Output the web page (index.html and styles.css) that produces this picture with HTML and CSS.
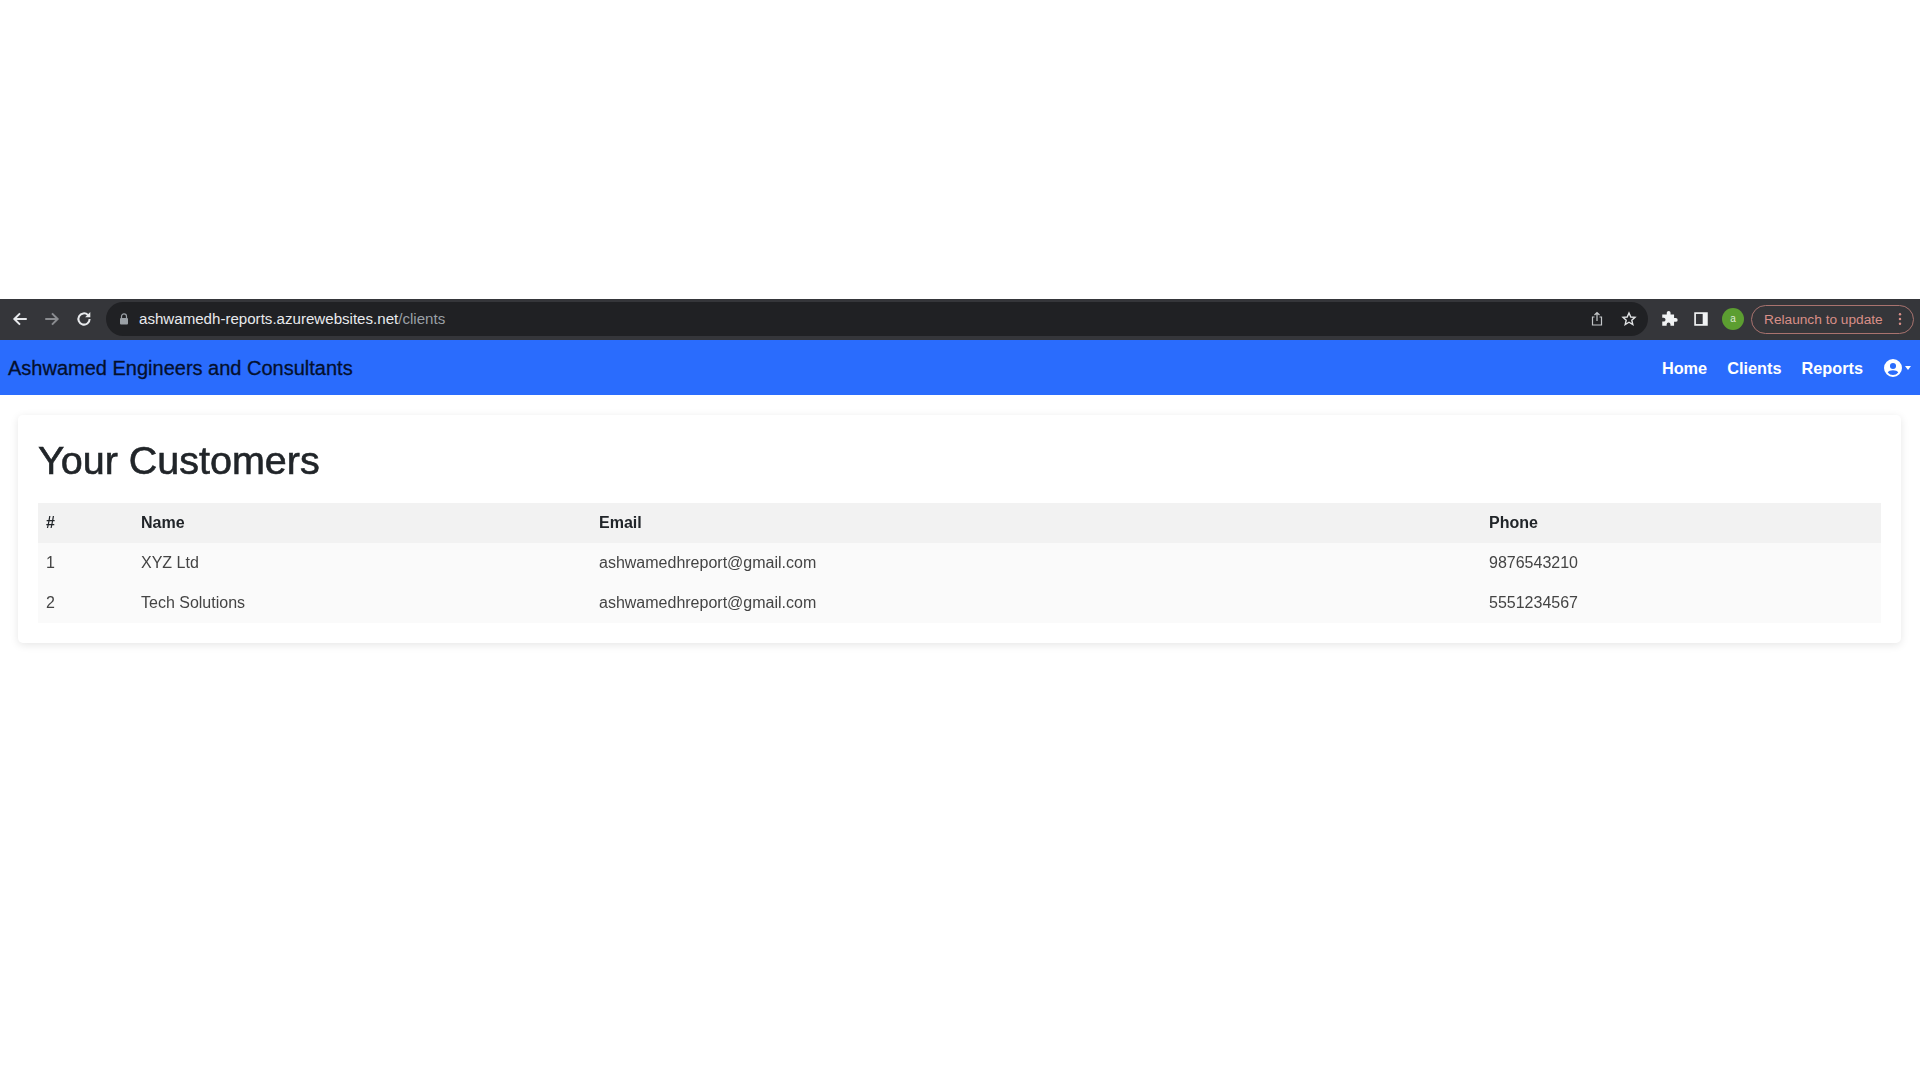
FILE: index.html
```html
<!DOCTYPE html>
<html lang="en">
<head>
    <meta charset="UTF-8">
    <title>Your Customers</title>
    <link rel="stylesheet" href="styles.css">
</head>
<body>
    <div class="shot">
        <div class="toolbar">
            <div class="nav-icons">
                <svg class="tool-icon" viewBox="0 0 16 16"><path d="M14 8H3M8 3 3 8l5 5" fill="none" stroke="#e8eaed" stroke-width="1.8"/></svg>
                <svg class="tool-icon" viewBox="0 0 16 16"><path d="M2 8h11M8 3l5 5-5 5" fill="none" stroke="#8a8c90" stroke-width="1.8"/></svg>
                <svg class="tool-icon" viewBox="0 0 16 16"><path d="M13 8a5 5 0 1 1-1.5-3.6" fill="none" stroke="#e8eaed" stroke-width="1.8"/><path d="M13.6 1.8v4.6H9z" fill="#e8eaed"/></svg>
            </div>
            <div class="omnibox">
                <svg class="lock" viewBox="0 0 10 12"><path d="M2.5 5V3.4a2.5 2.5 0 0 1 5 0V5" fill="none" stroke="#9aa0a6" stroke-width="1.2"/><rect x="1" y="5" width="8" height="6.5" rx="1" fill="#9aa0a6"/></svg>
                <div class="url">ashwamedh-reports.azurewebsites.net<span class="url-path">/clients</span></div>
                <svg class="omni-icon" viewBox="0 0 16 16"><path d="M5.5 6H3.5v8h9V6h-2M8 10V2M5.5 4 8 1.5 10.5 4" fill="none" stroke="#c4c7c9" stroke-width="1.2"/></svg>
                <svg class="omni-icon" viewBox="0 0 16 16"><path d="m8 2 1.8 4 4.2.4-3.2 2.8 1 4.300L8 11.200 4.200 13.500l1-4.300L2 6.400 6.200 6z" fill="none" stroke="#e0e2e4" stroke-width="1.400"/></svg>
            </div>
            <div class="ext-icons">
                <svg class="ext-icon" viewBox="0 0 16 16"><path d="M6 2.500a1.700 1.700 0 0 1 3.400 0V4h3.100v3.100H14a1.700 1.700 0 0 1 0 3.400h-1.500V14H9.300v-1.200a1.700 1.700 0 0 0-3.400 0V14H2v-3.700h1.200a1.700 1.700 0 0 0 0-3.400H2V4h4z" fill="#f1f3f4"/></svg>
                <svg class="ext-icon" viewBox="0 0 16 16"><rect x="2" y="2" width="12" height="12" fill="#f1f3f4"/><rect x="3.500" y="3.500" width="6" height="9" fill="#35363a"/></svg>
                <div class="avatar">a</div>
            </div>
            <div class="relaunch">
                <span class="relaunch-text">Relaunch to update</span>
                <svg class="dots" viewBox="0 0 4 16"><circle cx="2" cy="2.500" r="1.400"/><circle cx="2" cy="8" r="1.400"/><circle cx="2" cy="13.500" r="1.400"/></svg>
            </div>
        </div>

        <nav class="navbar">
            <a class="brand">Ashwamed Engineers and Consultants</a>
            <div class="nav-links">
                <a class="nav-link">Home</a>
                <a class="nav-link">Clients</a>
                <a class="nav-link">Reports</a>
                <div class="user-menu">
                    <svg class="user-icon" viewBox="0 0 16 16"><path fill="#fff" fill-rule="evenodd" d="M8 0a8 8 0 1 0 0 16A8 8 0 0 0 8 0zm0 3.500a2.700 2.700 0 1 1 0 5.400 2.700 2.700 0 0 1 0-5.400zM3.300 12c.7-1.300 2.500-2 4.700-2s4 .7 4.700 2A6.300 6.300 0 0 1 8 14.300 6.300 6.300 0 0 1 3.300 12z"/></svg>
                    <span class="caret"></span>
                </div>
            </div>
        </nav>

        <div class="card">
            <h1>Your Customers</h1>
            <table class="customers">
                <thead>
                    <tr>
                        <th class="col-id">#</th>
                        <th class="col-name">Name</th>
                        <th class="col-email">Email</th>
                        <th>Phone</th>
                    </tr>
                </thead>
                <tbody>
                    <tr>
                        <td>1</td>
                        <td>XYZ Ltd</td>
                        <td>ashwamedhreport@gmail.com</td>
                        <td>9876543210</td>
                    </tr>
                    <tr>
                        <td>2</td>
                        <td>Tech Solutions</td>
                        <td>ashwamedhreport@gmail.com</td>
                        <td>5551234567</td>
                    </tr>
                </tbody>
            </table>
        </div>
    </div>
</body>
</html>
```

FILE: styles.css
```css
body {
    margin: 0;
    background-color: #fff;
    font-family: "Liberation Sans", Arial, sans-serif;
    color: #212529;
}
.shot {
    padding: 299px 0 60px;
    filter: blur(0.6px);
}
.toolbar {
    display: flex;
    align-items: center;
    height: 41px;
    box-sizing: border-box;
    padding-bottom: 1px;
    background-color: #35363a;
}
.nav-icons {
    display: flex;
    gap: 14px;
    padding-left: 11px;
    width: 106px;
    box-sizing: border-box;
}
.tool-icon {
    width: 18px;
    height: 18px;
}
.omnibox {
    display: flex;
    align-items: center;
    width: 1542px;
    height: 34px;
    box-sizing: border-box;
    padding-right: 11px;
    border-radius: 17px;
    background-color: #202124;
}
.lock {
    width: 10px;
    height: 12px;
    margin-left: 13px;
}
.url {
    flex: 1;
    margin-left: 10px;
    font-size: 15.1px;
    line-height: 16px;
    padding-bottom: 1px;
    color: #e8eaed;
}
.url-path {
    color: #9aa0a6;
}
.omni-icon {
    width: 16px;
    height: 16px;
    margin-left: 16px;
}
.ext-icons {
    display: flex;
    align-items: center;
    gap: 14px;
    padding-left: 12px;
    width: 103px;
    box-sizing: border-box;
}
.ext-icon {
    width: 18px;
    height: 18px;
}
.avatar {
    width: 22px;
    height: 22px;
    margin-left: -2px;
    border-radius: 50%;
    background-color: #5c9e31;
    color: #dfe9d6;
    font-size: 10px;
    line-height: 22px;
    text-align: center;
}
.relaunch {
    display: flex;
    align-items: center;
    justify-content: space-between;
    width: 163px;
    height: 29px;
    box-sizing: border-box;
    padding: 0 11px 0 12px;
    border: 1.5px solid #a9736f;
    border-radius: 15px;
}
.relaunch-text {
    font-size: 13.7px;
    color: #d98f88;
}
.dots {
    width: 4px;
    height: 14px;
    fill: #d98f88;
}
.navbar {
    display: flex;
    align-items: center;
    justify-content: space-between;
    height: 55px;
    box-sizing: border-box;
    padding: 1px 9px 0 8px;
    background-color: #2a6cfd;
}
.brand {
    font-size: 20px;
    color: #04102e;
    -webkit-text-stroke: 0.3px #04102e;
}
.nav-links {
    display: flex;
    align-items: center;
    gap: 20px;
}
.nav-link {
    font-size: 16.3px;
    font-weight: bold;
    color: #fff;
}
.user-menu {
    display: flex;
    align-items: center;
    gap: 3px;
    margin-left: 1px;
}
.user-icon {
    width: 18px;
    height: 18px;
}
.caret {
    border-top: 4px solid #fff;
    border-left: 3.5px solid transparent;
    border-right: 3.5px solid transparent;
}
.card {
    margin: 20px 19px 0 18px;
    padding: 20px;
    border-radius: 5px;
    background-color: #fff;
    box-shadow: 0 2px 8px rgba(0,0,0,0.1);
}
h1 {
    margin: 0 0 18px;
    font-size: 39.5px;
    font-weight: 500;
    line-height: 50px;
    -webkit-text-stroke: 0.6px #212529;
}
.customers {
    width: 100%;
    border-collapse: collapse;
    font-size: 16px;
}
.customers th, .customers td {
    height: 40px;
    box-sizing: border-box;
    padding: 0 8px;
    text-align: left;
}
.customers thead tr {
    background-color: #f2f2f2;
}
.customers tbody tr {
    background-color: #fafafa;
}
.customers td {
    color: #444;
}
.col-id {
    width: 95px;
}
.col-name {
    width: 458px;
}
.col-email {
    width: 890px;
}
```
